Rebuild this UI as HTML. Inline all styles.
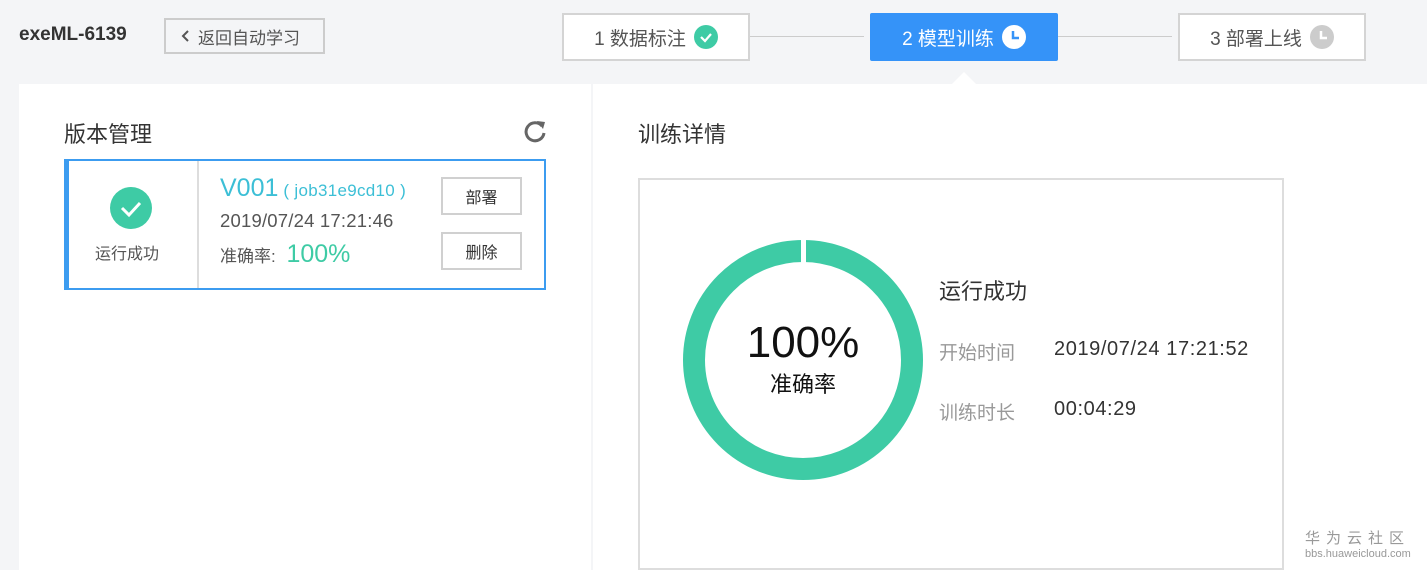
<!DOCTYPE html>
<html><head><meta charset="utf-8"><style>
*{margin:0;padding:0;box-sizing:border-box}
body{width:1427px;height:570px;background:#f4f5f7;font-family:"Liberation Sans","Noto Sans CJK SC",sans-serif;position:relative;overflow:hidden;color:#333}
.a{position:absolute}
.step{position:absolute;top:13px;height:48px;border:2px solid #d4d4d4;background:#fff;font-size:19px;color:#555;display:flex;align-items:center;justify-content:center;gap:8px}
.btn{position:absolute;width:81px;height:38px;border:2px solid #d0d0d0;background:#fff;font-size:16px;color:#333;display:flex;align-items:center;justify-content:center}
</style></head><body>
<div class="a" style="left:19px;top:24px;font-size:19px;font-weight:bold;color:#333">exeML-6139</div>
<div class="a" style="left:164px;top:18px;width:161px;height:36px;border:2px solid #ccc;font-size:17px;color:#555;display:flex;align-items:center;padding-left:14px;gap:8px"><svg width="10" height="14"><path d="M8 2L3 7l5 5" stroke="#555" stroke-width="2" fill="none"/></svg>返回自动学习</div>
<div class="a" style="left:750px;top:36px;width:114px;height:1px;background:#ccc"></div>
<div class="a" style="left:1058px;top:36px;width:114px;height:1px;background:#ccc"></div>
<div class="step" style="left:562px;width:188px">1 数据标注 <svg width="24" height="24"><circle cx="12" cy="12" r="12" fill="#3ecba5"/><path d="M7 12l4 4 6-7" stroke="#fff" stroke-width="2.2" fill="none"/></svg></div>
<div class="step" style="left:870px;width:188px;background:#3593f8;border-color:#3593f8;color:#fff;border-radius:2px">2 模型训练 <svg width="24" height="24"><circle cx="12" cy="12" r="12" fill="#fff"/><path d="M11 6v7h6" stroke="#3593f8" stroke-width="2.5" fill="none"/></svg></div>
<div class="step" style="left:1178px;width:188px">3 部署上线 <svg width="24" height="24"><circle cx="12" cy="12" r="12" fill="#ccc"/><path d="M11 6v7h6" stroke="#fff" stroke-width="2.5" fill="none"/></svg></div>
<div class="a" style="left:19px;top:84px;width:572px;height:486px;background:#fff"></div>
<div class="a" style="left:593px;top:84px;width:834px;height:486px;background:#fff"></div>
<div class="a" style="left:952px;top:72px;width:0;height:0;border-left:12px solid transparent;border-right:12px solid transparent;border-bottom:12px solid #fff"></div>
<div class="a" style="left:64px;top:117px;font-size:22px;color:#333">版本管理</div>
<svg class="a" style="left:522px;top:118px" width="26" height="26"><path d="M20 8A9 9 0 1 0 22 15" stroke="#666" stroke-width="3" fill="none"/><path d="M15 3l8 1-2 7z" fill="#666"/></svg>
<div class="a" style="left:64px;top:159px;width:482px;height:131px;border:2px solid #3c9cf0;border-left:5px solid #3c9cf0"></div>
<div class="a" style="left:197px;top:161px;width:2px;height:127px;background:#ddd"></div>
<svg class="a" style="left:110px;top:187px" width="42" height="42"><circle cx="21" cy="21" r="21" fill="#3ecba5"/><path d="M12 21l7 7 11-12" stroke="#fff" stroke-width="3" fill="none"/></svg>
<div class="a" style="left:95px;top:240px;font-size:16px;color:#555">运行成功</div>
<div class="a" style="left:220px;top:174px;font-size:25px;color:#3cbfd6">V001<span style="font-size:17px;letter-spacing:0.3px"> ( job31e9cd10 )</span></div>
<div class="a" style="left:220px;top:210px;font-size:18.5px;color:#555;letter-spacing:0.2px">2019/07/24 17:21:46</div>
<div class="a" style="left:220px;top:240px;font-size:17px;color:#555">准确率: <span style="font-size:25px;color:#3ecba5;margin-left:6px">100%</span></div>
<div class="btn" style="left:441px;top:177px">部署</div>
<div class="btn" style="left:441px;top:232px">删除</div>
<div class="a" style="left:638px;top:117px;font-size:22px;color:#333">训练详情</div>
<div class="a" style="left:638px;top:178px;width:646px;height:392px;border:2px solid #ddd"></div>
<svg class="a" style="left:683px;top:240px" width="240" height="240"><circle cx="120" cy="120" r="109" stroke="#3ecba5" stroke-width="22" fill="none"/><rect x="118" y="0" width="5" height="24" fill="#fff"/></svg>
<div class="a" style="left:683px;top:318px;width:240px;text-align:center;font-size:44px;color:#111">100%</div>
<div class="a" style="left:683px;top:367px;width:240px;text-align:center;font-size:22px;color:#111">准确率</div>
<div class="a" style="left:939px;top:274px;font-size:22px;color:#333">运行成功</div>
<div class="a" style="left:939px;top:338px;font-size:19px;color:#999">开始时间</div>
<div class="a" style="left:1054px;top:338px;font-size:20px;color:#333;letter-spacing:0.6px">2019/07/24 17:21:52</div>
<div class="a" style="left:939px;top:398px;font-size:19px;color:#999">训练时长</div>
<div class="a" style="left:1054px;top:398px;font-size:20px;color:#333;letter-spacing:0.6px">00:04:29</div>
<div class="a" style="left:1305px;top:527px;font-size:15px;color:#999;letter-spacing:6px">华为云社区</div>
<div class="a" style="left:1305px;top:548px;font-size:11px;color:#999">bbs.huaweicloud.com</div>
</body></html>
